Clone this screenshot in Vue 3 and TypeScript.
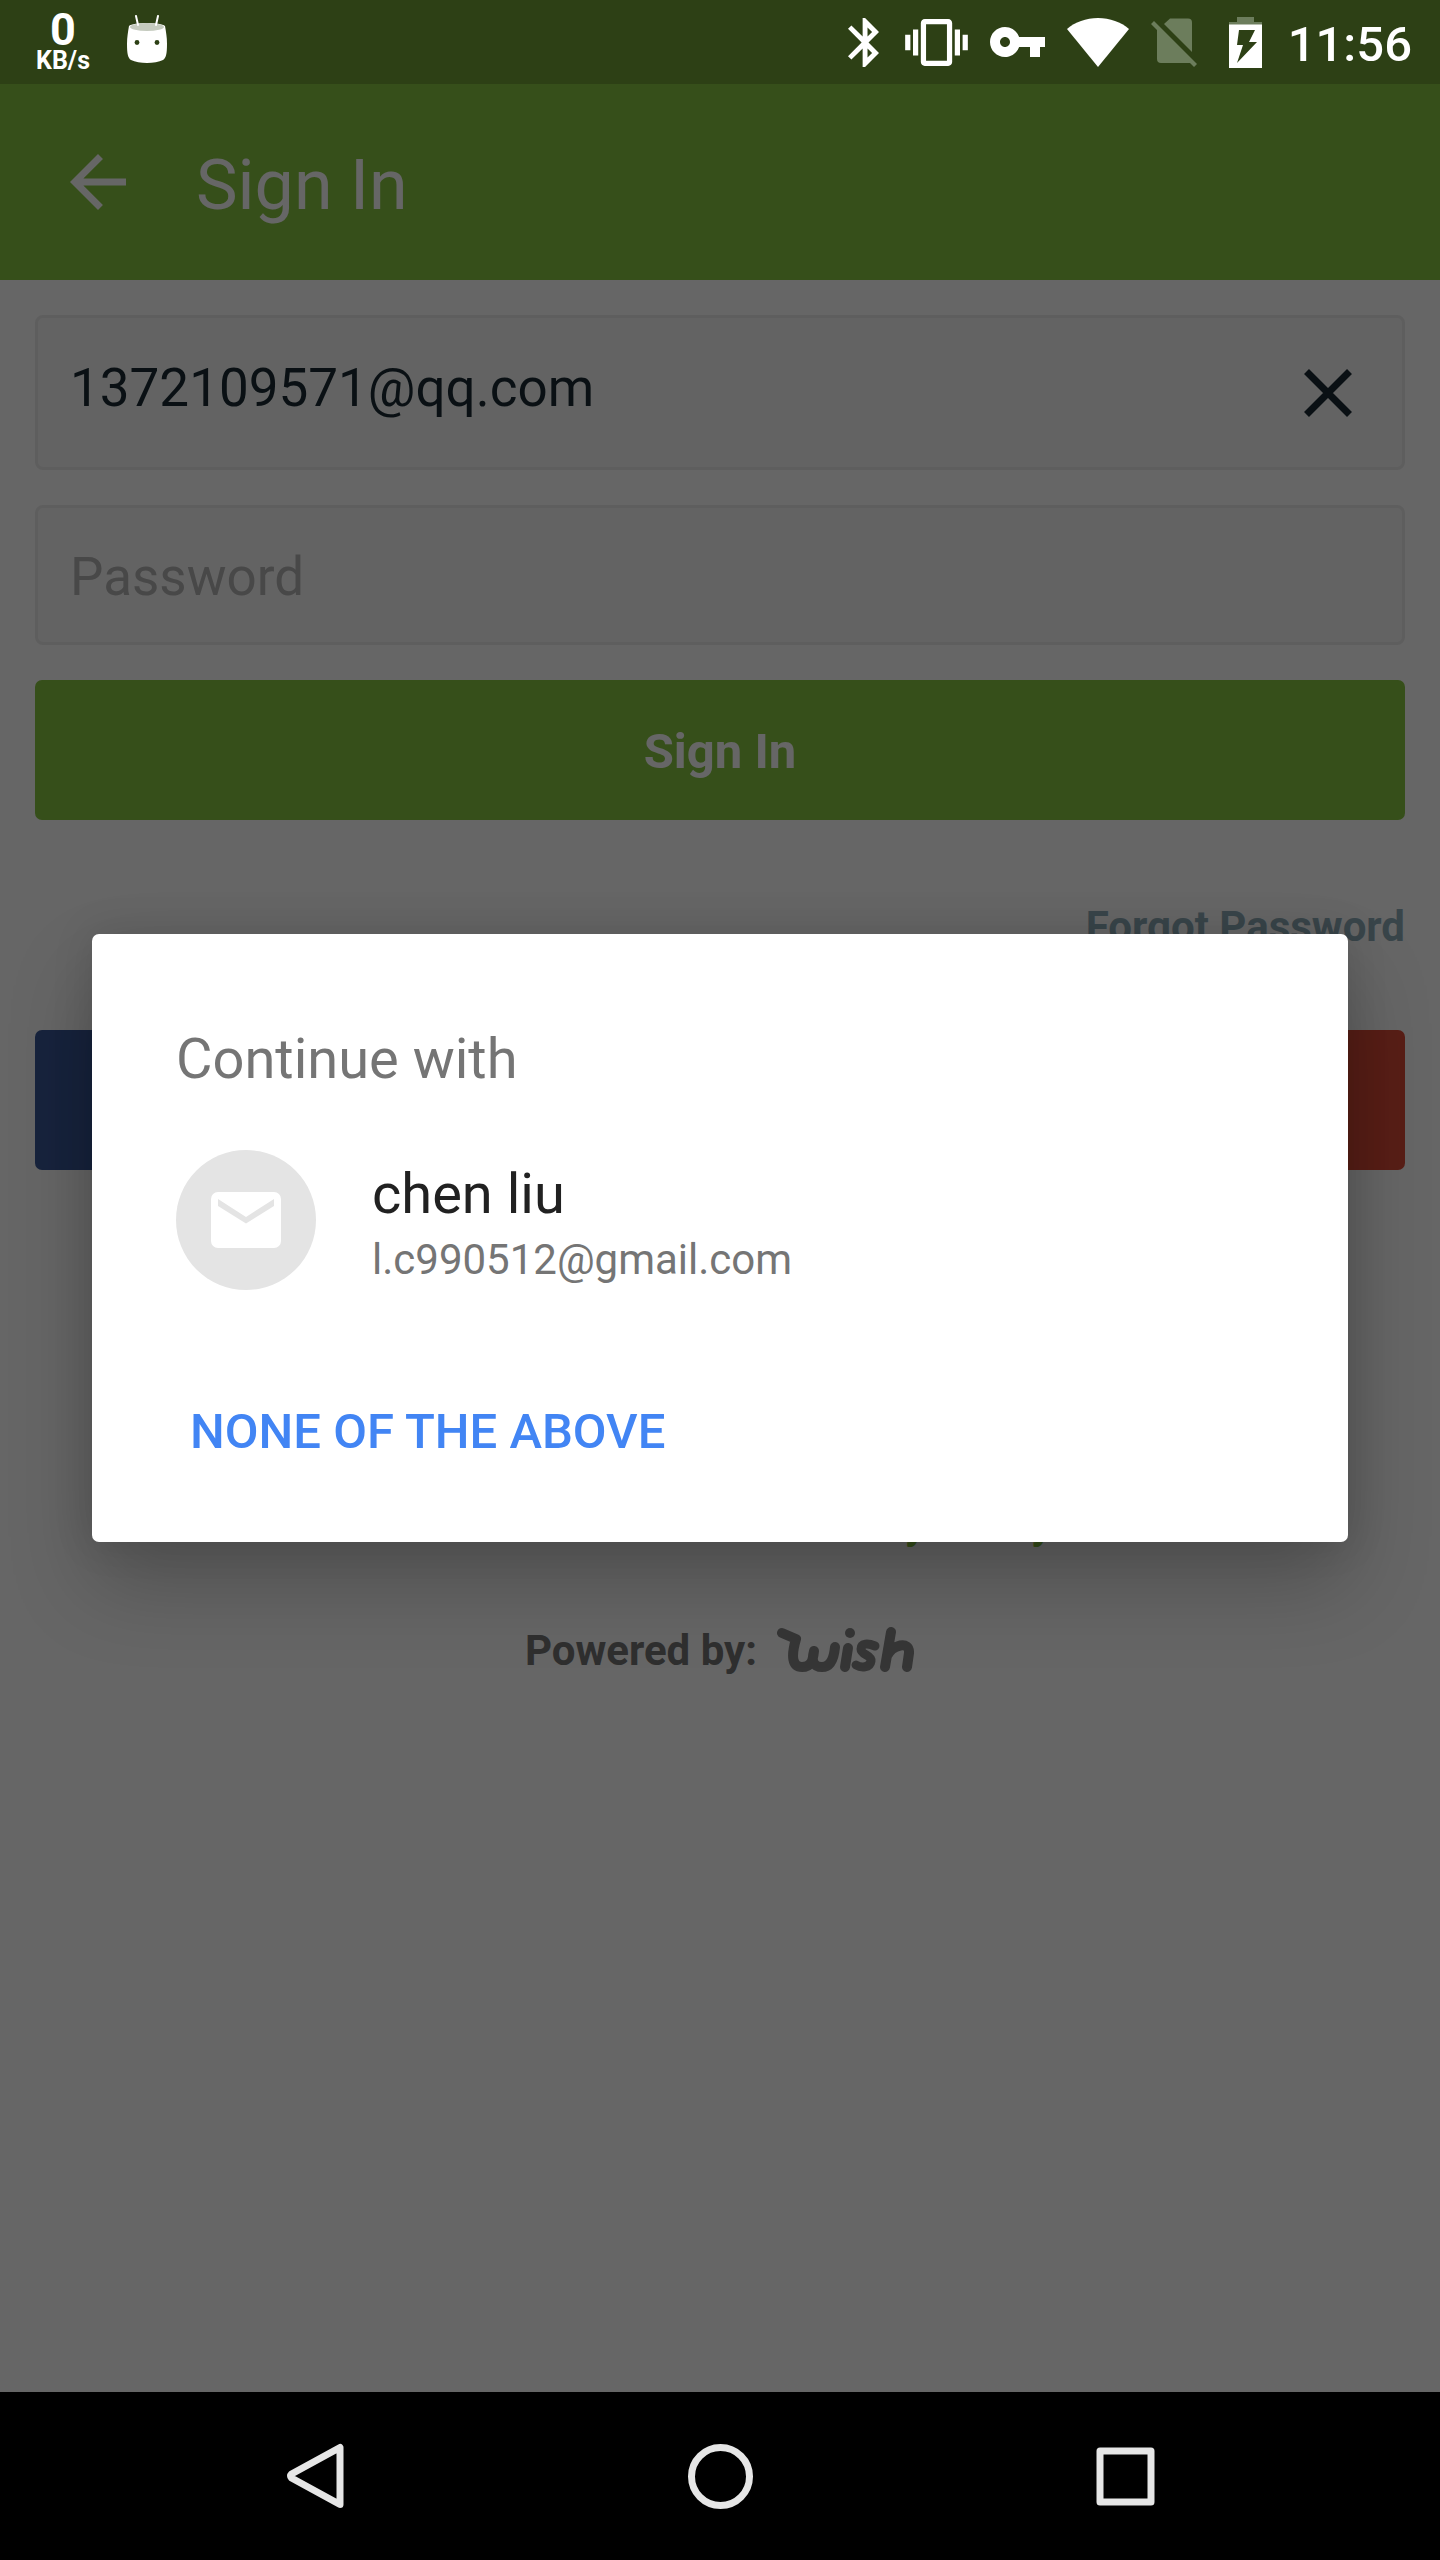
<script setup lang="ts">
import { ref } from 'vue'

interface Account {
  name: string
  email: string
}

const email = ref('1372109571@qq.com')
const password = ref('')
const dialogOpen = ref(true)
const accounts: Account[] = [{ name: 'chen liu', email: 'l.c990512@gmail.com' }]

function choose(account: Account) {
  email.value = account.email
  dialogOpen.value = false
}
</script>

<template>
  <div class="screen">
    <header class="status">
      <div class="speed">
        <span class="speed-value">0</span>
        <span class="speed-unit">KB/s</span>
      </div>
      <svg class="mascot" width="40" height="48" viewBox="0 0 40 48" aria-hidden="true">
        <path d="M2 11C1 17 0 22 0 29C0 39 1 43 4 45C12 49 28 49 36 45C39 43 40 39 40 29C40 22 39 17 38 11C34 7 6 7 2 11Z" fill="#fff" />
        <ellipse cx="20" cy="12" rx="17" ry="4" fill="#c5cbbf" />
        <path d="M9 1L11 10M31 1L29 10" stroke="#fff" stroke-width="2" stroke-linecap="round" />
        <circle cx="10" cy="27.5" r="2.4" fill="#2d4015" />
        <circle cx="30" cy="27.5" r="2.4" fill="#2d4015" />
      </svg>
      <div class="indicators">
        <svg width="31" height="49" viewBox="5 2 12.71 20" aria-hidden="true">
          <path fill="#fff" d="M17.71 7.71L12 2h-1v7.59L6.41 5 5 6.41 10.59 12 5 17.59 6.41 19 11 14.41V22h1l5.71-5.71-4.3-4.29 4.3-4.29zM13 5.83l1.88 1.88L13 9.59V5.83zm1.88 10.46L13 18.17v-3.76l1.88 1.88z" />
        </svg>
        <svg class="vibrate" width="63" height="47" viewBox="0 3 24 18" aria-hidden="true">
          <path fill="#fff" d="M0 15h2V9H0v6zm3 2h2V7H3v10zm19-8v6h2V9h-2zm-3 8h2V7h-2v10zM16.5 3h-9C6.67 3 6 3.67 6 4.5v15c0 .83.67 1.5 1.5 1.5h9c.83 0 1.5-.67 1.5-1.5v-15c0-.83-.67-1.5-1.5-1.5zM16 19H8V5h8v14z" />
        </svg>
        <svg width="55" height="30" viewBox="1 6 22 12" aria-hidden="true">
          <path fill="#fff" d="M12.65 10C11.83 7.67 9.61 6 7 6c-3.31 0-6 2.69-6 6s2.69 6 6 6c2.61 0 4.83-1.67 5.65-4H17v4h4v-4h2v-4H12.65zM7 14c-1.1 0-2-.9-2-2s.9-2 2-2 2 .9 2 2-.9 2-2 2z" />
        </svg>
        <svg width="62" height="49" viewBox="0 0 62 49" aria-hidden="true">
          <path fill="#fff" d="M31 49L0 11C8 4 19 0 31 0S54 4 62 11Z" />
        </svg>
        <svg width="46" height="49" viewBox="0 0 46 49" aria-hidden="true">
          <path fill="#6c7d5c" d="M13 6L19 0.5H37Q41 0.5 41 4.500V34Z" />
          <path fill="#6c7d5c" d="M6 12L0 6L3 3L46 46L43 49L39 45H10Q6 45 6 41Z" />
        </svg>
        <svg class="battery" width="33" height="51" viewBox="0 0 33 51" aria-hidden="true">
          <path fill="#6c7d5c" d="M8 0H25V5H33V8H0V5H8Z" />
          <path fill="#fff" d="M0 7.500H33V51H0Z" />
          <path fill="#2d4015" d="M10 13H26L20 25H28L8 46L14 28H8Z" />
        </svg>
        <time class="clock">11:56</time>
      </div>
    </header>

    <main class="app">
      <div class="toolbar">
        <button class="icon-button" type="button" aria-label="Back">
          <svg width="84" height="84" viewBox="0 0 24 24" aria-hidden="true">
            <path fill="#fff" d="M20 11H7.830l5.590-5.590L12 4l-8 8 8 8 1.410-1.410L7.830 13H20v-2z" />
          </svg>
        </button>
        <h1 class="title">Sign In</h1>
      </div>

      <form class="form" @submit.prevent>
        <div class="field field-email">
          <input v-model="email" type="email" aria-label="Email" />
          <button class="icon-button" type="button" aria-label="Clear email" @click="email = ''">
            <svg width="48" height="48" viewBox="0 0 48 48" aria-hidden="true">
              <path d="M2.500 2.500L45.500 45.500M45.500 2.500L2.500 45.500" stroke="#192a32" stroke-width="7" />
            </svg>
          </button>
        </div>
        <div class="field field-password">
          <input v-model="password" type="password" placeholder="Password" aria-label="Password" />
        </div>
        <button class="submit" type="submit">Sign In</button>
        <div class="forgot"><a href="#forgot">Forgot Password</a></div>
        <div class="social">
          <button class="facebook" type="button" aria-label="Facebook"></button>
          <button class="google" type="button" aria-label="Google"></button>
        </div>
      </form>

      <footer class="footer">
        <div class="legal"><a href="#privacy">Privacy Policy</a></div>
        <div class="powered">
          <span>Powered by:</span>
          <svg width="138" height="48" viewBox="0 0 138 48" role="img" aria-label="wish" fill="none" stroke="#888" stroke-width="10" stroke-linecap="round" stroke-linejoin="round">
            <path d="M5 6L19 12C14 29 15 40 25 40C34 40 36 34 37 24C34 35 37 40 45 40C54 40 57 31 58 20" />
            <path d="M71 21L68 40" />
            <circle cx="73" cy="6" r="5" fill="#888" stroke="none" />
            <path d="M98 19C91 16 84 16 84 22C84 28 95 28 94 34C93 41 84 41 79 38" stroke-width="9" />
            <path d="M114 5L108 40M110 29C115 18 133 13 132 26L130 40" />
          </svg>
        </div>
      </footer>

      <div v-if="dialogOpen" class="scrim">
        <section class="dialog" role="dialog" aria-modal="true" aria-labelledby="dialog-title">
          <h2 id="dialog-title">Continue with</h2>
          <button v-for="account in accounts" :key="account.email" class="account" type="button" @click="choose(account)">
            <svg width="140" height="140" viewBox="0 0 140 140" aria-hidden="true">
              <circle cx="70" cy="70" r="70" fill="#e4e4e4" />
              <rect x="35" y="42" width="70" height="56" rx="7" fill="#fff" />
              <path d="M42 49L70 67L98 49V56L70 73.500L42 56Z" fill="#e4e4e4" />
            </svg>
            <span class="details">
              <span class="name">{{ account.name }}</span>
              <span class="address">{{ account.email }}</span>
            </span>
          </button>
          <button class="none" type="button" @click="dialogOpen = false">NONE OF THE ABOVE</button>
        </section>
      </div>
    </main>

    <nav class="navbar" aria-label="System">
      <button type="button" aria-label="Back">
        <svg width="84" height="84" viewBox="0 0 84 84" aria-hidden="true">
          <path d="M65 13.500V70.500L16.500 44Q14.500 42 16.500 40Z" fill="none" stroke="#e6e6e6" stroke-width="7" stroke-linejoin="round" />
        </svg>
      </button>
      <button type="button" aria-label="Home">
        <svg width="84" height="84" viewBox="0 0 84 84" aria-hidden="true">
          <circle cx="42.500" cy="42.500" r="29" fill="none" stroke="#e6e6e6" stroke-width="7" />
        </svg>
      </button>
      <button type="button" aria-label="Recent apps">
        <svg width="84" height="84" viewBox="0 0 84 84" aria-hidden="true">
          <rect x="19" y="17" width="51" height="51" fill="none" stroke="#e6e6e6" stroke-width="7" stroke-linejoin="round" />
        </svg>
      </button>
    </nav>
  </div>
</template>

<style>
body {
  margin: 0;
  background: #000;
}
</style>

<style scoped>
.screen,
.screen * {
  box-sizing: border-box;
}

.screen {
  display: flex;
  flex-direction: column;
  min-height: 100vh;
  font-family: Roboto, 'Liberation Sans', sans-serif;
}

svg {
  display: block;
  flex: none;
}

button {
  margin: 0;
  padding: 0;
  border: 0;
  background: none;
  font: inherit;
  color: inherit;
  cursor: pointer;
}

a {
  text-decoration: none;
}

.status {
  display: flex;
  align-items: center;
  height: 84px;
  padding: 0 28px 0 36px;
  background: #2d4015;
  color: #fff;
}

.speed {
  display: flex;
  flex-direction: column;
  align-items: center;
  padding-top: 2px;
  font-weight: 700;
}

.speed-value {
  font-size: 45px;
  line-height: 36px;
}

.speed-unit {
  font-size: 25px;
  line-height: 26px;
}

.mascot {
  margin: 0 0 7px 37px;
}

.indicators {
  display: flex;
  align-items: center;
  gap: 22px;
  margin-left: auto;
}

.vibrate {
  margin-left: 4px;
}

.battery {
  margin-left: 10px;
}

.clock {
  margin-left: 4px;
  padding-top: 5px;
  font-size: 49px;
  line-height: 58px;
  font-weight: 500;
}

.app {
  position: relative;
  display: flex;
  flex: 1;
  flex-direction: column;
  background: #fff;
}

.toolbar {
  display: flex;
  align-items: center;
  gap: 56px;
  height: 196px;
  padding: 0 56px;
  background: #87c641;
}

.title {
  margin: 0;
  padding-top: 6px;
  font-size: 70px;
  line-height: 82px;
  font-weight: 400;
  color: #fff;
}

.form {
  display: flex;
  flex-direction: column;
  gap: 35px;
  padding: 35px 35px 0;
}

.field {
  display: flex;
  align-items: center;
  height: 140px;
  padding: 0 50px 0 32px;
  border: 3px solid #ebebeb;
  border-radius: 8px;
  background: #f8f8f8;
}

.field-email {
  height: 155px;
}

.field input {
  flex: 1;
  min-width: 0;
  height: 100%;
  padding: 0;
  border: 0;
  outline: 0;
  background: none;
  font: inherit;
  font-size: 53px;
  color: #192a32;
}

.field-email input {
  padding-bottom: 10px;
}

.field-password input {
  padding-top: 4px;
}

.field input::placeholder {
  color: #b4b4b4;
  opacity: 1;
}

.submit {
  height: 140px;
  padding-top: 2px;
  border-radius: 7px;
  background: #87c641;
  font-size: 49px;
  font-weight: 700;
  color: #fff;
}

.forgot {
  padding: 47px 0 44px;
  text-align: right;
  font-size: 42px;
  line-height: 49px;
  font-weight: 700;
}

.forgot a {
  color: #8fadb9;
}

.social {
  display: flex;
  gap: 35px;
}

.social button {
  flex: 1;
  height: 140px;
  border-radius: 7px;
}

.facebook {
  background: #3b5998;
}

.google {
  background: #dd4b39;
}

.footer {
  display: flex;
  flex-direction: column;
  align-items: center;
  gap: 78px;
  padding-top: 329px;
  font-size: 42px;
  line-height: 49px;
  font-weight: 700;
}

.legal {
  padding-left: 398px;
}

.legal a {
  color: #87c641;
}

.powered {
  display: flex;
  align-items: center;
  gap: 20px;
  color: #757575;
}

.scrim {
  position: absolute;
  inset: 0;
  display: flex;
  align-items: center;
  justify-content: center;
  padding: 0 92px;
  background: rgba(0, 0, 0, 0.6);
}

.dialog {
  display: flex;
  flex: 1;
  flex-direction: column;
  align-items: flex-start;
  padding: 92px 84px 47px;
  border-radius: 7px;
  background: #fff;
  box-shadow: 0 42px 84px rgba(0, 0, 0, 0.22), 0 0 42px rgba(0, 0, 0, 0.12);
}

.dialog h2 {
  margin: 0 0 58px;
  font-size: 56px;
  line-height: 66px;
  font-weight: 400;
  color: #757575;
}

.account {
  display: flex;
  align-items: center;
  gap: 56px;
  width: 100%;
  text-align: left;
}

.details {
  display: flex;
  flex-direction: column;
  gap: 8px;
  padding-top: 4px;
}

.name {
  font-size: 56px;
  line-height: 66px;
  color: #212121;
}

.address {
  font-size: 42px;
  line-height: 49px;
  color: #757575;
}

.none {
  height: 126px;
  margin-top: 79px;
  padding: 0 14px;
  font-size: 49px;
  line-height: 58px;
  font-weight: 500;
  color: #4285f4;
}

.navbar {
  display: flex;
  justify-content: center;
  height: 168px;
  background: #000;
}

.navbar button {
  display: flex;
  align-items: center;
  justify-content: center;
  width: 28%;
}
</style>
